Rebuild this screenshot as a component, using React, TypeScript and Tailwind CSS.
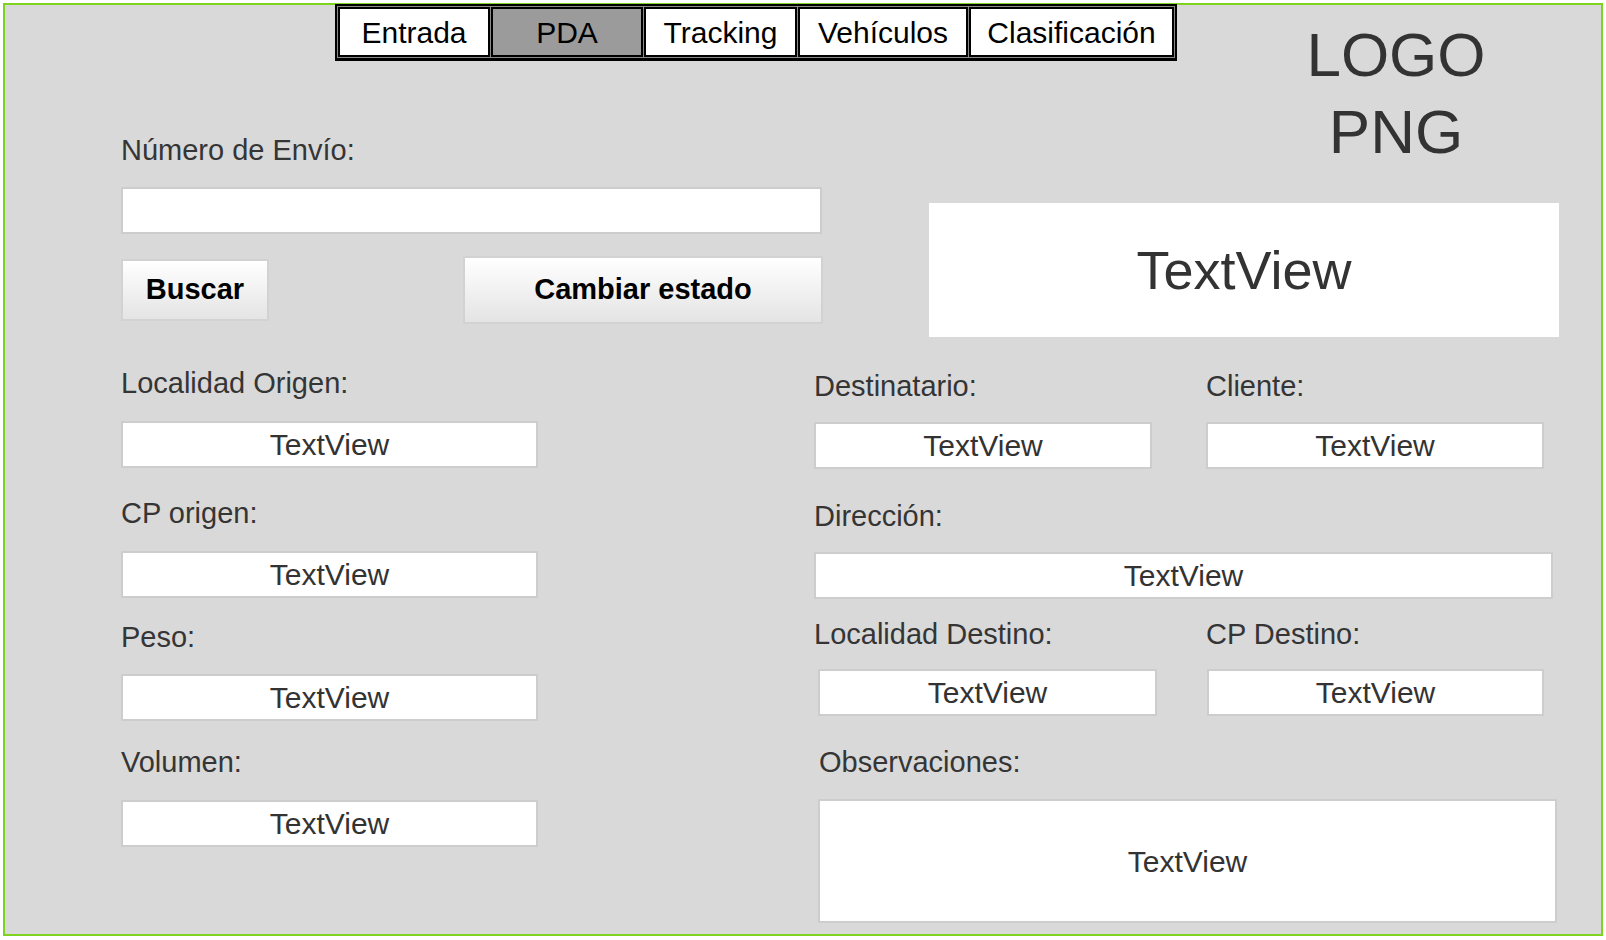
import React from "react";

const font = "font-['Liberation_Sans',Arial,Helvetica,sans-serif]";

const tabs = [
  { name: "Entrada", w: "w-[152px]" },
  { name: "PDA", w: "w-[152px]", active: true },
  { name: "Tracking", w: "w-[153px]" },
  { name: "Vehículos", w: "w-[170px]" },
  { name: "Clasificación", w: "w-[205px]" },
];

function Label({ children, className = "" }: { children: React.ReactNode; className?: string }) {
  return <div className={`text-[29px] leading-[34px] text-[#353535] whitespace-nowrap ${className}`}>{children}</div>;
}

function TextView({ className = "" }: { className?: string }) {
  return (
    <div
      className={`flex items-center justify-center bg-white border-2 border-[#cdcdcd] text-[30px] text-[#333] ${className}`}
    >
      TextView
    </div>
  );
}

function TabBar() {
  return (
    <div className="flex w-[842px] h-[57px] -mt-[1px] border-2 border-b-[3px] border-black bg-[#8a8a8a] p-[1px] gap-[1px] ml-[330px]">
      {tabs.map((t) => (
        <div
          key={t.name}
          className={`${t.w} h-full flex items-center justify-center border-2 border-black text-[30px] text-black ${
            t.active ? "bg-[#9b9b9b]" : "bg-white"
          }`}
        >
          {t.name}
        </div>
      ))}
    </div>
  );
}

export default function App() {
  return (
    <div className={`w-[1606px] h-[940px] bg-white p-[3px] ${font}`}>
      <div className="w-[1600px] h-[933px] border-2 border-[#7ed321] bg-[#d9d9d9] flex flex-col">
        {/* top: tabs + search / logo + status */}
        <div className="flex">
          <div className="w-[924px] flex flex-col">
            <TabBar />
            <Label className="ml-[116px] mt-[72px]">Número de Envío:</Label>
            <div className="ml-[116px] mt-[20px] w-[701px] h-[47px] bg-white border-2 border-[#cdcdcd]" />
            <div className="ml-[116px] mt-[22px] h-[68px] flex items-center">
              <button className="w-[148px] h-[62px] border-2 border-[#d2d2d2] bg-gradient-to-b from-white to-[#e4e4e4] text-[29px] font-bold text-black">
                Buscar
              </button>
              <button className="ml-[194px] w-[360px] h-[68px] border-2 border-[#d2d2d2] bg-gradient-to-b from-white to-[#e4e4e4] text-[29px] font-bold text-black">
                Cambiar estado
              </button>
            </div>
          </div>
          <div className="flex flex-col">
            <div className="ml-[367px] mt-[11px] w-[200px] text-center text-[62px] leading-[77px] text-[#333]">
              <div>LOGO</div>
              <div>PNG</div>
            </div>
            <div className="mt-[33px] w-[630px] h-[134px] bg-white flex items-center justify-center text-[54px] text-[#333]">
              TextView
            </div>
          </div>
        </div>

        {/* bottom: detail fields */}
        <div className="flex">
          <div className="ml-[116px] w-[417px] flex flex-col">
            <Label className="mt-[29px]">Localidad Origen:</Label>
            <TextView className="mt-[21px] h-[47px]" />
            <Label className="mt-[28px]">CP origen:</Label>
            <TextView className="mt-[21px] h-[47px]" />
            <Label className="mt-[22px]">Peso:</Label>
            <TextView className="mt-[20px] h-[47px]" />
            <Label className="mt-[24px]">Volumen:</Label>
            <TextView className="mt-[21px] h-[47px]" />
          </div>

          <div className="ml-[276px] w-[745px] flex flex-col">
            <div className="mt-[32px] flex">
              <div className="w-[392px]">
                <Label>Destinatario:</Label>
                <TextView className="mt-[19px] w-[338px] h-[47px]" />
              </div>
              <div>
                <Label>Cliente:</Label>
                <TextView className="mt-[19px] w-[338px] h-[47px]" />
              </div>
            </div>
            <Label className="mt-[30px]">Dirección:</Label>
            <TextView className="mt-[19px] w-[739px] h-[47px]" />
            <div className="mt-[18px] flex">
              <div className="w-[392px]">
                <Label>Localidad Destino:</Label>
                <TextView className="mt-[18px] ml-[4px] w-[339px] h-[47px]" />
              </div>
              <div>
                <Label>CP Destino:</Label>
                <TextView className="mt-[18px] ml-[1px] w-[337px] h-[47px]" />
              </div>
            </div>
            <Label className="mt-[29px] ml-[5px]">Observaciones:</Label>
            <TextView className="mt-[20px] ml-[4px] w-[739px] h-[124px]" />
          </div>
        </div>
      </div>
    </div>
  );
}
